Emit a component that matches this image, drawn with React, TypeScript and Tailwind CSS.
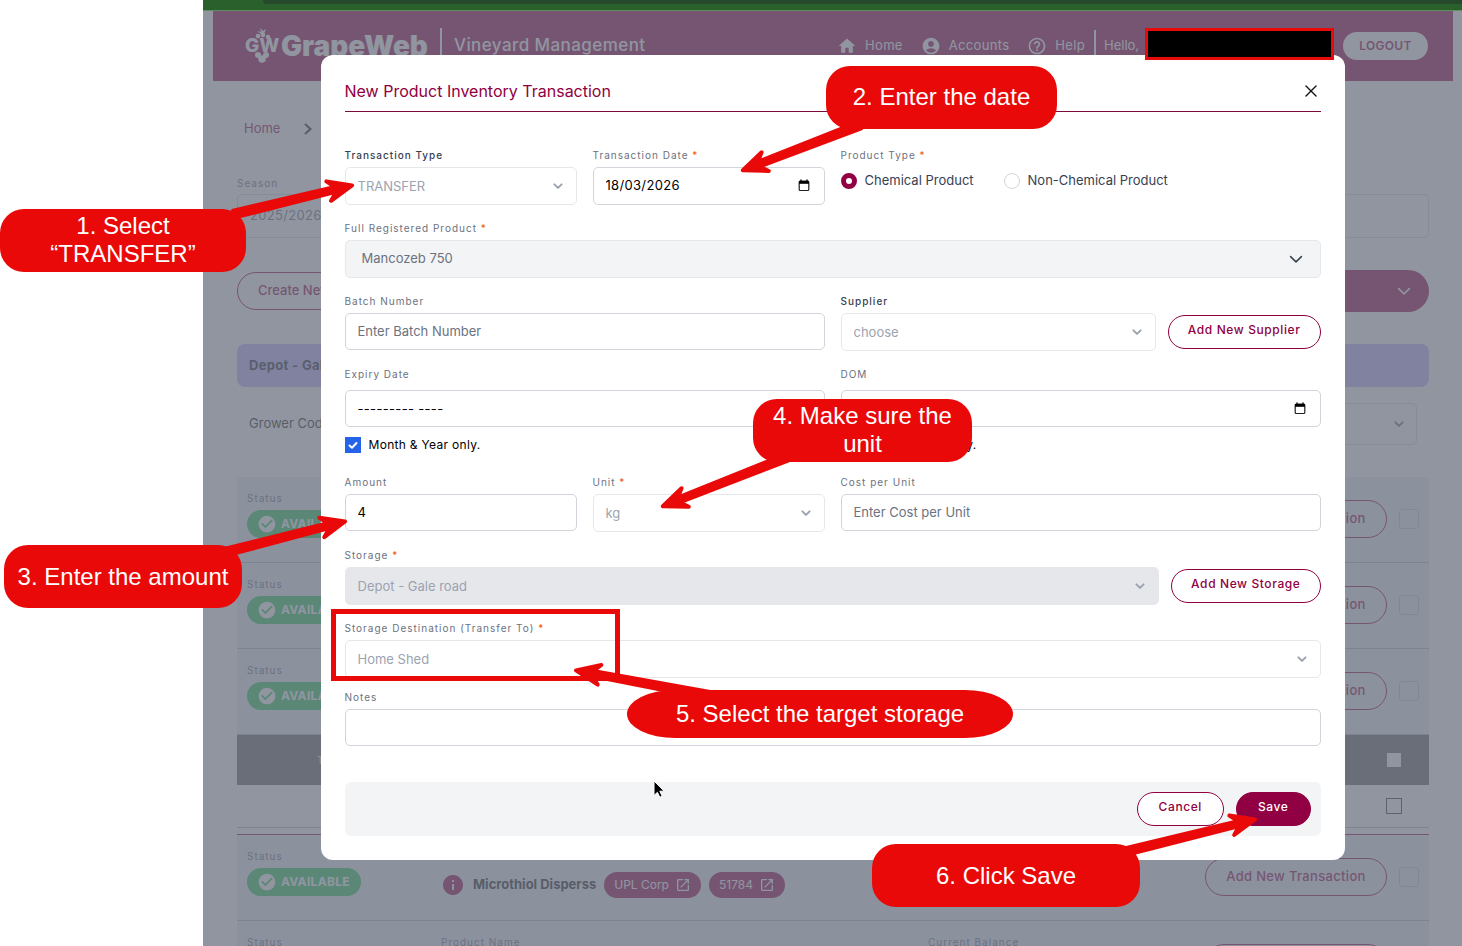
import React from 'react';
import { MdHome, MdAccountCircle, MdHelpOutline, MdOpenInNew, MdCheckCircle, MdInfo } from 'react-icons/md';

const RED = '#ea0909';

const inputClass = 'w-full rounded-[5px] border border-[#d1d5db] bg-white px-3 text-[13px] text-black placeholder:text-[#6b7280] outline-none';

const Chevron: React.FC<{ className?: string; strokeWidth?: number }> = ({ className, strokeWidth = 2 }) => (
    <svg viewBox="0 0 12 12" className={className} fill="none" stroke="currentColor" strokeWidth={strokeWidth} strokeLinecap="round" strokeLinejoin="round">
        <path d="M2.4 4.4 6 7.9 9.6 4.4" />
    </svg>
);

const CalendarIcon: React.FC = () => (
    <svg viewBox="0 0 12 13" className="pointer-events-none absolute right-[15px] top-[12px] h-[13px] w-3" aria-hidden="true">
        <path d="M3 .5v2M9 .5v2" stroke="#000" strokeWidth="1.4" />
        <rect x="1.2" y="2.2" width="9.6" height="9.3" rx="1" fill="none" stroke="#222" strokeWidth="1.2" />
        <path d="M1 2h10v2.8H1z" fill="#000" />
    </svg>
);

const FieldLabel: React.FC<{ htmlFor?: string; required?: boolean; strong?: boolean; children: React.ReactNode }> = ({ htmlFor, required, strong, children }) => (
    <label htmlFor={htmlFor} className={`block h-4 text-[10px] leading-4 tracking-widest whitespace-nowrap ${strong ? 'font-medium text-[#374151]' : 'text-[#6b7280]'}`}>
        {children}
        {required && <span className="text-[#ea580c]"> *</span>}
    </label>
);

const Select: React.FC<{ id: string; value: string; variant?: 'plain' | 'filled' | 'product' }> = ({ id, value, variant = 'plain' }) => {
    const look = {
        plain: 'border-[#e5e7eb] bg-white text-[#9ca3af] pl-3 pt-[2px]',
        filled: 'border-[#e5e7eb] bg-[#e5e7eb] text-[#9ca3af] pl-3 pt-[2px]',
        product: 'border-[#e5e7eb] bg-[#f3f4f6] text-[#6b7280] pl-4',
    }[variant];
    return (
        <div className="relative">
            <select id={id} defaultValue={value} className={`h-[38px] w-full appearance-none rounded-[5px] border text-[13px] outline-none ${look}`}>
                <option>{value}</option>
            </select>
            {variant === 'product'
                ? <Chevron strokeWidth={1} className="pointer-events-none absolute right-4 top-[10px] h-[18px] w-[18px] text-[#374151]" />
                : <Chevron className="pointer-events-none absolute right-[13px] top-[13px] h-3 w-3 text-[#9ca3af]" />}
        </div>
    );
};

const PillButton: React.FC<{ filled?: boolean; className?: string; children: React.ReactNode }> = ({ filled, className, children }) => (
    <button type="button" className={`h-[34px] shrink-0 rounded-full border border-[#900042] pb-1 text-xs font-medium tracking-wider whitespace-nowrap ${filled ? 'bg-[#900042] text-white' : 'bg-white text-[#900042]'} ${className ?? ''}`}>
        {children}
    </button>
);

const MonthYearCheck: React.FC<{ id: string }> = ({ id }) => (
    <div className="mt-[10px] flex h-4 items-center gap-2">
        <span className="relative h-4 w-4">
            <input id={id} type="checkbox" defaultChecked className="block h-4 w-4 appearance-none bg-[#2563eb]" />
            <svg viewBox="0 0 16 16" className="pointer-events-none absolute inset-0 h-4 w-4" fill="none" stroke="#fff" strokeWidth="2" strokeLinecap="round" strokeLinejoin="round">
                <path d="M4.5 8.5 7 10.7 11.5 6" />
            </svg>
        </span>
        <label htmlFor={id} className="text-xs tracking-wide text-black">Month &amp; Year only.</label>
    </div>
);

const TransactionModal: React.FC = () => (
    <div role="dialog" aria-label="New Product Inventory Transaction" className="w-full max-w-5xl rounded-xl bg-white p-6">
        <div className="flex h-[33px] items-start justify-between border-b border-[#7d0a3d]">
            <h2 className="text-base leading-6 text-[#900042]">New Product Inventory Transaction</h2>
            <button type="button" aria-label="Close" className="mt-1 mr-[3px]">
                <svg viewBox="0 0 14 14" className="h-4 w-[14px]" stroke="#111" strokeWidth="1.4" strokeLinecap="round">
                    <path d="M2 2 12 12M12 2 2 12" />
                </svg>
            </button>
        </div>

        <form className="mt-[35px]">
            <div className="mb-[15px] grid grid-cols-4 gap-4">
                <div className="space-y-1">
                    <FieldLabel htmlFor="type" strong>Transaction Type</FieldLabel>
                    <Select id="type" value="TRANSFER" />
                </div>
                <div className="space-y-1">
                    <FieldLabel htmlFor="date" required>Transaction Date</FieldLabel>
                    <div className="relative">
                        <input id="date" defaultValue="18/03/2026" className={`${inputClass} h-[38px] pb-[2px] tracking-wide`} />
                        <CalendarIcon />
                    </div>
                </div>
                <fieldset className="col-span-2">
                    <legend className="block">
                        <FieldLabel required>Product Type</FieldLabel>
                    </legend>
                    <div className="mt-1 flex h-7 items-center gap-[30px] text-[13px] text-[#374151]">
                        <div className="flex items-center gap-2">
                            <input id="chemical" type="radio" name="product" defaultChecked className="h-4 w-4 appearance-none rounded-full border-[5px] border-[#900042] bg-white" />
                            <label htmlFor="chemical">Chemical Product</label>
                        </div>
                        <div className="flex items-center gap-2">
                            <input id="non-chemical" type="radio" name="product" className="h-4 w-4 appearance-none rounded-full border border-[#d1d5db] bg-white" />
                            <label htmlFor="non-chemical">Non-Chemical Product</label>
                        </div>
                    </div>
                </fieldset>
            </div>

            <div className="mb-[15px] space-y-1">
                <FieldLabel htmlFor="product" required>Full Registered Product</FieldLabel>
                <Select id="product" value="Mancozeb 750" variant="product" />
            </div>

            <div className="mb-[15px] grid grid-cols-2 gap-4">
                <div className="space-y-1">
                    <FieldLabel htmlFor="batch">Batch Number</FieldLabel>
                    <input id="batch" placeholder="Enter Batch Number" className={`${inputClass} h-[37px] pb-[2px]`} />
                </div>
                <div className="flex items-end gap-3">
                    <div className="flex-1 space-y-1">
                        <FieldLabel htmlFor="supplier" strong>Supplier</FieldLabel>
                        <Select id="supplier" value="choose" />
                    </div>
                    <PillButton className="mb-[2px] px-[19px]">Add New Supplier</PillButton>
                </div>
            </div>

            <div className="mb-[21px] grid grid-cols-2 gap-4">
                <div>
                    <FieldLabel htmlFor="expiry">Expiry Date</FieldLabel>
                    <input id="expiry" defaultValue="--------- ----" className={`${inputClass} mt-2 h-[37px] tracking-wide`} />
                    <MonthYearCheck id="expiry-month" />
                </div>
                <div>
                    <FieldLabel htmlFor="dom">DOM</FieldLabel>
                    <div className="relative mt-2">
                        <input id="dom" defaultValue="--------- ----" className={`${inputClass} h-[37px] tracking-wide`} />
                        <CalendarIcon />
                    </div>
                    <MonthYearCheck id="dom-month" />
                </div>
            </div>

            <div className="mb-[15px] grid grid-cols-4 gap-4">
                <div className="space-y-1">
                    <FieldLabel htmlFor="amount">Amount</FieldLabel>
                    <input id="amount" defaultValue="4" className={`${inputClass} h-[37px] pb-[2px]`} />
                </div>
                <div className="space-y-1">
                    <FieldLabel htmlFor="unit" required>Unit</FieldLabel>
                    <Select id="unit" value="kg" />
                </div>
                <div className="col-span-2 space-y-1">
                    <FieldLabel htmlFor="cost">Cost per Unit</FieldLabel>
                    <input id="cost" placeholder="Enter Cost per Unit" className={`${inputClass} h-[37px] pb-[2px]`} />
                </div>
            </div>

            <div className="mb-[15px] flex items-end gap-3">
                <div className="flex-1 space-y-1">
                    <FieldLabel htmlFor="storage" required>Storage</FieldLabel>
                    <Select id="storage" value="Depot - Gale road" variant="filled" />
                </div>
                <PillButton className="mb-[2px] px-[19px]">Add New Storage</PillButton>
            </div>

            <div className="mb-[11px] space-y-1">
                <FieldLabel htmlFor="destination" required>Storage Destination (Transfer To)</FieldLabel>
                <Select id="destination" value="Home Shed" />
            </div>

            <div className="space-y-1">
                <FieldLabel htmlFor="notes">Notes</FieldLabel>
                <input id="notes" className={`${inputClass} h-[37px]`} />
            </div>

            <div className="mt-9 flex justify-end gap-3 rounded-md bg-[#f3f4f6] p-[10px]">
                <PillButton className="px-[21px]">Cancel</PillButton>
                <PillButton filled className="px-[21px]">Save</PillButton>
            </div>
        </form>
    </div>
);

const Logo: React.FC = () => (
    <div className="flex items-center gap-[2px] text-white">
        <svg viewBox="0 0 34 36" className="h-9 w-[34px]" fill="currentColor">
            <path d="M16 6 12 3l4 1-1-4 3 3 3-2-2 5z" />
            <circle cx="13" cy="8" r="2.3" />
            <circle cx="18" cy="7" r="2.3" />
            <circle cx="23" cy="9" r="2.3" />
            <circle cx="13" cy="27" r="3" />
            <circle cx="21" cy="27" r="3" />
            <circle cx="17" cy="31" r="3.8" />
            <text x="0" y="24" fontSize="19" fontWeight="800" fontFamily="Inter, sans-serif">GW</text>
        </svg>
        <span className="text-[28px] leading-8 font-black">GrapeWeb</span>
    </div>
);

const TopBar: React.FC = () => (
    <header className="flex h-[70px] items-center bg-[#960047] pl-8 pr-[25px] text-white">
        <Logo />
        <span className="ml-3 h-9 w-[2px] bg-white" />
        <span className="ml-3 text-[17px] font-medium tracking-wide">Vineyard Management</span>
        <nav className="ml-auto flex items-center text-[13px]">
            <a href="#home" className="flex items-center gap-2 tracking-wide"><MdHome className="h-5 w-5" />Home</a>
            <a href="#accounts" className="ml-[18px] flex items-center gap-2 tracking-wide"><MdAccountCircle className="h-5 w-5" />Accounts</a>
            <a href="#help" className="ml-[18px] flex items-center gap-2 tracking-wide"><MdHelpOutline className="h-5 w-5" />Help</a>
            <span className="ml-[9px] h-8 w-[2px] bg-white" />
            <span className="ml-2 w-[239px]">Hello,</span>
            <button type="button" className="h-7 w-[85px] rounded-full bg-white text-xs font-semibold tracking-wide text-[#960047]">LOGOUT</button>
        </nav>
    </header>
);

const caption = 'block h-4 text-[10px] leading-4 tracking-widest text-[#6b7280]';

const InventoryRow: React.FC<{ named?: boolean }> = ({ named }) => (
    <div className="flex h-[86px] shrink-0 border-b border-[#b5b9c0] bg-[#eef0f8] px-[10px] pt-[13px]">
        <div className="w-[194px]">
            <span className={caption}>Status</span>
            <span className="mt-1 inline-flex h-7 w-[114px] items-center gap-1 rounded-full bg-[#2cc55e] pl-[10px] text-xs font-bold tracking-wide text-white">
                <MdCheckCircle className="h-5 w-5 shrink-0" />AVAILABLE
            </span>
        </div>
        <div className="w-[487px]">
            <span className={caption}>Product Name</span>
            {named && (
                <div className="mt-2 flex h-[26px] items-center gap-2 text-xs">
                    <MdInfo className="h-6 w-6 text-[#960047]" />
                    <span className="text-[13px] font-bold text-[#222]">Microthiol Disperss</span>
                    <a href="#supplier" className="flex h-[26px] items-center gap-[6px] rounded-full bg-[#960047] px-[10px] text-white">UPL Corp<MdOpenInNew className="h-4 w-4" /></a>
                    <a href="#batch" className="flex h-[26px] items-center gap-[6px] rounded-full bg-[#960047] px-[10px] text-white">51784<MdOpenInNew className="h-4 w-4" /></a>
                </div>
            )}
        </div>
        <span className={caption}>Current Balance</span>
        <div className="mt-[10px] ml-auto flex h-[38px] items-center gap-3">
            <button type="button" className="h-[38px] w-[182px] rounded-full border border-[#960047] text-[13px] font-medium tracking-wide text-[#960047]">Add New Transaction</button>
            <input type="checkbox" aria-label="Select row" className="h-5 w-5 appearance-none rounded-[3px] border border-[#c3c7ce]" />
        </div>
    </div>
);

const InventoryPage: React.FC = () => (
    <div className="pl-[10px] pr-[9px]">
        <TopBar />
        <main className="px-6">
            <div className="ml-[7px] flex h-24 items-center gap-6 text-[13px] text-[#960047]">
                <a href="#home">Home</a>
                <svg viewBox="0 0 8 12" className="h-3 w-2" fill="none" stroke="#222" strokeWidth="2"><path d="M1 1 6.5 6 1 11" /></svg>
            </div>
            <label htmlFor="season" className={`${caption} -mt-[2px]`}>Season</label>
            <select id="season" className="mt-[3px] block h-11 w-full appearance-none rounded-[5px] border border-[#d1d5db] pl-3 text-[13px] tracking-wide text-[#6b7280]">
                <option>2025/2026</option>
            </select>
            <div className="mt-8 flex h-[42px] items-center justify-between">
                <button type="button" className="h-[38px] rounded-full border border-[#960047] px-5 text-[13px] font-medium text-[#960047]">Create New Inventory</button>
                <button type="button" className="flex h-[42px] w-[260px] items-center justify-between rounded-full bg-[#960047] pl-5 pr-4 text-[13px] text-white">
                    Actions<Chevron strokeWidth={1} className="h-[18px] w-[18px]" />
                </button>
            </div>
            <div className="mt-8 flex h-[43px] items-center rounded-lg bg-[#c4b5fd] pl-3 text-[13px] font-bold tracking-wide text-[#1f2937]">Depot - Gale road</div>
            <div className="mt-4 flex h-[42px] items-center justify-between px-3 text-[13px] text-[#222]">
                <label htmlFor="grower">Grower Code</label>
                <div className="relative w-[260px]">
                    <select id="grower" className="h-[42px] w-full appearance-none rounded-[5px] border border-[#d1d5db]"><option></option></select>
                    <Chevron className="absolute right-3 top-[15px] h-3 w-3 text-[#6b7280]" />
                </div>
            </div>
            <div className="mt-8">
                <InventoryRow />
                <InventoryRow />
                <InventoryRow />
                <div className="flex h-[50px] items-center justify-between bg-[#646464] pl-20 pr-7 text-[10px] text-white">
                    Transaction Type
                    <input type="checkbox" aria-label="Select all" className="h-[14px] w-[14px] appearance-none bg-white" />
                </div>
                <div className="mb-[6px] flex h-[43px] items-center justify-end border-b border-[#b5b9c0] pr-[27px]">
                    <input type="checkbox" aria-label="Select transaction" className="h-4 w-4 appearance-none border border-[#333]" />
                </div>
                <div className="border-t border-[#960047]">
                    <InventoryRow named />
                    <InventoryRow />
                </div>
            </div>
        </main>
    </div>
);

interface CalloutData {
    text: string;
    box: string;
    tip: [number, number];
    tail: [number, number];
}

const callouts: CalloutData[] = [
    { text: '1. Select “TRANSFER”', box: 'left-0 top-[209px] w-[246px] h-[63px] px-10 pb-[2px] rounded-3xl', tip: [354, 185], tail: [234, 214] },
    { text: '2. Enter the date', box: 'left-[826px] top-[66px] w-[231px] h-[63px] pb-[2px] rounded-3xl', tip: [741, 171], tail: [860, 125] },
    { text: '3. Enter the amount', box: 'left-[4px] top-[545px] w-[238px] h-[63px] rounded-3xl', tip: [347, 521], tail: [226, 552] },
    { text: '4. Make sure the unit', box: 'left-[753px] top-[399px] w-[219px] h-[63px] px-4 pb-[2px] rounded-3xl', tip: [661, 507], tail: [788, 457] },
    { text: '5. Select the target storage', box: 'left-[627px] top-[690px] w-[386px] h-[48px] rounded-[48px/24px]', tip: [574, 670], tail: [712, 696] },
    { text: '6. Click Save', box: 'left-[872px] top-[844px] w-[268px] h-[63px] rounded-3xl', tip: [1257, 819], tail: [1120, 853] },
];

const Arrow: React.FC<Pick<CalloutData, 'tip' | 'tail'>> = ({ tip, tail }) => {
    const dx = tip[0] - tail[0];
    const dy = tip[1] - tail[1];
    const length = Math.hypot(dx, dy);
    const angle = (Math.atan2(dy, dx) * 180) / Math.PI;
    return (
        <path
            transform={`translate(${tip[0]} ${tip[1]}) rotate(${angle})`}
            d={`M-2 0 L-26 -10 L-19 -2.5 L${-length} -3.5 L${-length} 3.5 L-19 2.5 L-26 10 Z`}
            fill={RED}
            stroke={RED}
            strokeWidth="4"
            strokeLinejoin="round"
        />
    );
};

const Annotations: React.FC = () => (
    <div className="pointer-events-none absolute inset-0">
        <div className="absolute left-[1145px] top-[28px] h-8 w-[189px] border-[3px] border-[#ea0909] bg-black" />
        <div className="absolute left-[331px] top-[609px] h-[72px] w-[289px] border-[5px] border-[#ea0909]" />
        <svg className="absolute inset-0 h-full w-full" aria-hidden="true">
            {callouts.map(c => <Arrow key={c.text} tip={c.tip} tail={c.tail} />)}
            <path d="M654 781v14.5l3.4-3.2 2.4 5 2.4-1.1-2.4-5h4.4z" fill="#000" stroke="#fff" strokeWidth="1" />
        </svg>
        {callouts.map(c => (
            <div key={c.text} className={`absolute flex items-center justify-center bg-[#ea0909] text-center font-['Liberation_Sans',sans-serif] text-2xl leading-7 text-white ${c.box}`}>
                {c.text}
            </div>
        ))}
    </div>
);

const App: React.FC = () => (
    <div className="relative flex h-screen overflow-hidden bg-white font-[Inter,sans-serif]">
        <div className="w-[203px] shrink-0" />
        <div className="flex min-w-0 flex-1 flex-col">
            <div className="h-[11px] shrink-0 border-b border-[#5f8f60] bg-[#2a602b] pl-[60px]">
                <div className="h-1 rounded-bl-lg bg-[#28482c]" />
            </div>
            <div className="relative min-h-0 flex-1 overflow-hidden">
                <InventoryPage />
                <div className="absolute inset-0 flex items-start justify-center bg-[#6b7280]/75 pt-11">
                    <TransactionModal />
                </div>
            </div>
        </div>
        <Annotations />
    </div>
);

export default App;
